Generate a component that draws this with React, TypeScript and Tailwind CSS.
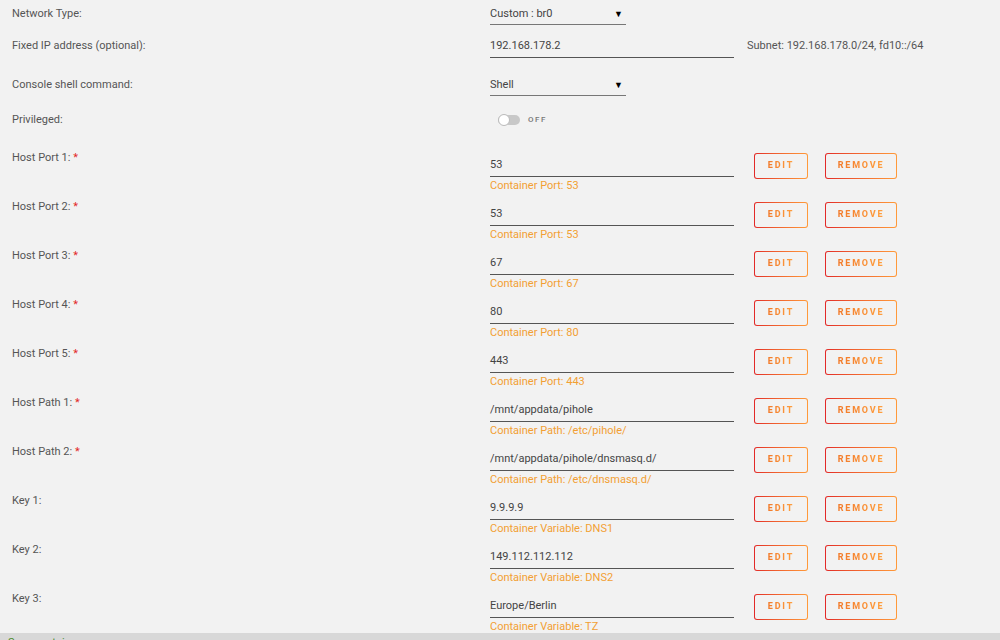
import React from "react";

const font = { fontFamily: "Roboto, 'Open Sans', sans-serif" };

type Row = { label: string; value: string; help: string; req: boolean };

const rows: Row[] = [
  { label: "Host Port 1:", value: "53", help: "Container Port: 53", req: true },
  { label: "Host Port 2:", value: "53", help: "Container Port: 53", req: true },
  { label: "Host Port 3:", value: "67", help: "Container Port: 67", req: true },
  { label: "Host Port 4:", value: "80", help: "Container Port: 80", req: true },
  { label: "Host Port 5:", value: "443", help: "Container Port: 443", req: true },
  { label: "Host Path 1:", value: "/mnt/appdata/pihole", help: "Container Path: /etc/pihole/", req: true },
  { label: "Host Path 2:", value: "/mnt/appdata/pihole/dnsmasq.d/", help: "Container Path: /etc/dnsmasq.d/", req: true },
  { label: "Key 1:", value: "9.9.9.9", help: "Container Variable: DNS1", req: false },
  { label: "Key 2:", value: "149.112.112.112", help: "Container Variable: DNS2", req: false },
  { label: "Key 3:", value: "Europe/Berlin", help: "Container Variable: TZ", req: false },
];

function GradButton({ text, width }: { text: string; width: string }) {
  return (
    <div className={`${width} h-[26px] rounded-[3px] p-[1px] bg-gradient-to-r from-[#e22828] to-[#ff9a3a]`}>
      <div className="flex h-full w-full items-center justify-center rounded-[2px] bg-[#f2f2f2]">
        <span className="bg-gradient-to-r from-[#f27a2a] to-[#ffa040] bg-clip-text text-[9px] font-extrabold tracking-[1.8px] text-transparent">
          {text}
        </span>
      </div>
    </div>
  );
}

function Label({ children, req }: { children: React.ReactNode; req?: boolean }) {
  return (
    <div className="w-[478px] shrink-0 pl-[12px] text-[11px] leading-[16px] text-[#555]">
      {children}
      {req && <span className="text-[#e22828]"> *</span>}
    </div>
  );
}

function Select({ value }: { value: string }) {
  return (
    <div className="flex w-[136px] items-center justify-between border-b border-[#777] pb-[2px] text-[11px] leading-[16px] text-[#444]">
      <span>{value}</span>
      <span className="pr-[3px] text-[9px] text-black">▼</span>
    </div>
  );
}

export default function App() {
  return (
    <div className="relative h-[640px] w-[1000px] overflow-hidden bg-[#f2f2f2]" style={font}>
      <div className="flex pt-[6px]">
        <Label>Network Type:</Label>
        <div className="pl-[12px]">
          <Select value="Custom : br0" />
        </div>
      </div>

      <div className="mt-[13px] flex">
        <Label>Fixed IP address (optional):</Label>
        <div className="flex pl-[12px]">
          <div className="w-[244px] border-b border-[#555] pb-[3px] text-[11px] leading-[16px] text-[#444]">192.168.178.2</div>
          <div className="pl-[13px] text-[11px] leading-[16px] text-[#555]">Subnet: 192.168.178.0/24, fd10::/64</div>
        </div>
      </div>

      <div className="mt-[19px] flex">
        <Label>Console shell command:</Label>
        <div className="pl-[12px]">
          <Select value="Shell" />
        </div>
      </div>

      <div className="mt-[16px] flex items-center">
        <Label>Privileged:</Label>
        <div className="flex items-center gap-[8px] pl-[20px]">
          <div className="relative h-[10px] w-[22px] rounded-full bg-[#c8c8c8]">
            <div className="absolute left-0 top-[-1px] h-[12px] w-[12px] rounded-full border border-[#bbb] bg-white" />
          </div>
          <span className="text-[8px] font-medium tracking-[1.5px] text-[#777]">OFF</span>
        </div>
      </div>

      <div className="mt-[20px] flex flex-col">
        {rows.map((r) => (
          <div key={r.label} className="flex h-[49px]">
            <div className="mt-[2px]">
              <Label req={r.req}>{r.label}</Label>
            </div>
            <div className="flex pl-[12px]">
              <div className="mt-[9px] w-[244px]">
                <div className="border-b border-[#555] pb-[3px] text-[11px] leading-[16px] text-[#444]">{r.value}</div>
                <div className="mt-[2px] text-[11px] leading-[14px] text-[#f2a033]">{r.help}</div>
              </div>
              <div className="ml-[20px] mt-[5px] flex gap-[17px]">
                <GradButton text="EDIT" width="w-[54px]" />
                <GradButton text="REMOVE" width="w-[72px]" />
              </div>
            </div>
          </div>
        ))}
      </div>

      <div className="absolute bottom-0 left-0 h-[7px] w-full bg-[#d8d8d8]">
        <span className="absolute left-[8px] top-[3px] text-[11px] leading-[14px] text-[#4a8a2a]">Save container</span>
      </div>
    </div>
  );
}
